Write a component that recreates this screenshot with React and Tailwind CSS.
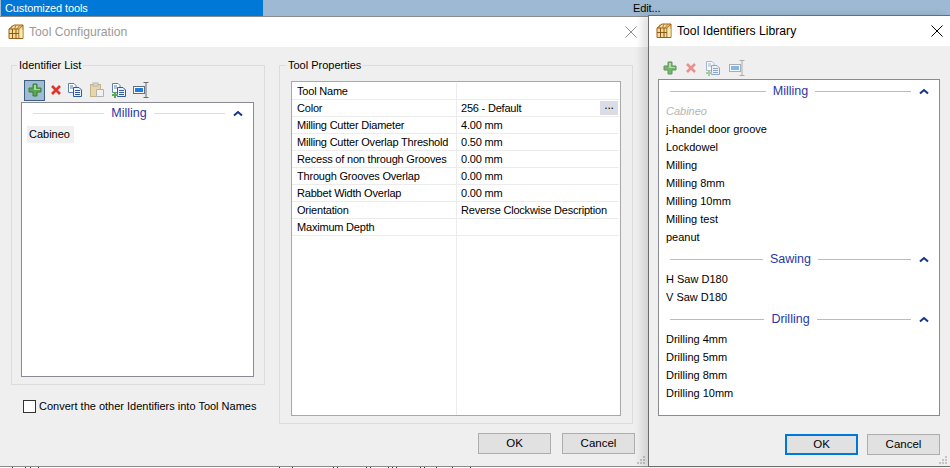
import React from 'react';

const FONT = 'font-["Liberation_Sans",Arial,sans-serif]';

// Small cabinet icon used on both title bars
function CabinetIcon() {
    return (
        <svg width="16" height="16" viewBox="0 0 16 16" className="shrink-0">
            <path d="M1 5 L6 1 H15 V14.5 H1 Z" fill="#f6dc94" stroke="#9c5f1e" />
            <path d="M1 5 H10.5 L15 1" fill="none" stroke="#9c5f1e" />
            <path d="M4 1.5 L3 5 M8 1 L6.5 5 M12 1 L9 5" fill="none" stroke="#b9792c" />
            <path d="M4.5 5 V14.5 M8 5 V14.5 M11 5 V14.5 M1 9.5 H11" stroke="#8a5a1c" fill="none" />
            <rect x="11.5" y="5.5" width="3" height="8.5" fill="#fbeeb0" />
        </svg>
    );
}

function PlusIcon({ faded }) {
    return (
        <svg width="14" height="14" viewBox="0 0 14 14" className={faded ? 'opacity-80' : ''}>
            <path d="M5 1 H9 V5 H13 V9 H9 V13 H5 V9 H1 V5 H5 Z" fill="#5aa84f" stroke="#3d7f3a" />
            <path d="M6 2 H8 V6 H12 V7 H6 Z" fill="#a5d89a" />
        </svg>
    );
}

function CrossIcon({ faded }) {
    return (
        <svg width="12" height="12" viewBox="0 0 12 12" className={faded ? 'opacity-50' : ''}>
            <path d="M2 2 L10 10 M10 2 L2 10" stroke="#e0352b" strokeWidth="2.6" />
        </svg>
    );
}

function CopyIcon({ faded, plus }) {
    return (
        <svg width="16" height="16" viewBox="0 0 16 16" className={faded ? 'opacity-50' : ''}>
            <path d="M1.5 1.5 H7 L9 3.5 V10.5 H1.5 Z" fill="#fff" stroke="#5f7fb0" />
            <path d="M6.5 5.5 H12 L14.5 8 V14.5 H6.5 Z" fill="#eaf1fb" stroke="#2f5a9c" />
            <path d="M8 8.5 H13 M8 10.5 H13 M8 12.5 H13" stroke="#2f5a9c" />
            <path d="M3 4 H6 M3 6 H6" stroke="#5f7fb0" />
            {plus && <path d="M3 10 H5 V12 H7 V14 H5 V16 H3 V14 H1 V12 H3 Z" fill="#5aa84f" />}
        </svg>
    );
}

function PasteIcon() {
    return (
        <svg width="16" height="16" viewBox="0 0 16 16" className="opacity-60">
            <rect x="1.5" y="2.5" width="10" height="12" fill="#e6c67a" stroke="#a98a45" />
            <rect x="4" y="1" width="5" height="3" fill="#c9c9c9" stroke="#8f8f8f" />
            <path d="M7.5 7.5 H14.5 V14.5 H7.5 Z" fill="#f3f3f3" stroke="#8a8a8a" />
        </svg>
    );
}

function RenameIcon({ faded }) {
    return (
        <svg width="16" height="16" viewBox="0 0 16 16" className={faded ? 'opacity-50' : ''}>
            <rect x="0.5" y="4.5" width="11" height="7" fill="#fff" stroke="#5f6f86" />
            <rect x="2" y="6" width="8" height="4" fill="#1f7ee0" />
            <path d="M10.5 0.5 H15.5 M13 0.5 V15.5 M10.5 15.5 H15.5" stroke="#6b6b6b" fill="none" />
        </svg>
    );
}

function SectionHeader({ title, lineClass }) {
    return (
        <div className="flex items-center h-[18px]">
            <div className={`h-px flex-1 ml-[11px] ${lineClass}`} />
            <span className="px-[7px] text-[12.5px] text-[#2b35a8] leading-[18px]">{title}</span>
            <div className={`h-px flex-1 ${lineClass}`} />
            <svg width="10" height="7" viewBox="0 0 10 7" className="ml-[8px] mr-[10px]">
                <path d="M1 5.5 L5 2 L9 5.5" fill="none" stroke="#12358c" strokeWidth="2" />
            </svg>
        </div>
    );
}

function TitleBar({ title, inactive, closeClass }) {
    return (
        <div className={`h-[30px] bg-white flex items-center pr-[7px] shrink-0 ${inactive ? 'pl-[8px]' : 'pl-[7px]'}`}>
            <CabinetIcon />
            <span className={`ml-[5px] text-[12.2px] flex-1 ${inactive ? 'text-[#9a9a9a]' : 'text-black'}`}>{title}</span>
            <svg width="12" height="12" viewBox="0 0 12 12" className={closeClass}>
                <path d="M0.5 0.5 L11.5 11.5 M11.5 0.5 L0.5 11.5" stroke="currentColor" />
            </svg>
        </div>
    );
}

function DialogButton({ label, primary }) {
    return (
        <button className={`w-[73px] h-[21px] bg-[#e1e1e1] text-[11.5px] leading-none text-black border ${primary ? 'border-2 border-[#0078d7]' : 'border-[#adadad]'}`}>
            {label}
        </button>
    );
}

function Grip() {
    return (
        <svg width="9" height="9" viewBox="0 0 9 9" className="absolute right-[2px] bottom-[1px]">
            <path d="M6 0 h2 v2 h-2 Z M3 3 h2 v2 h-2 Z M6 3 h2 v2 h-2 Z M0 6 h2 v2 h-2 Z M3 6 h2 v2 h-2 Z M6 6 h2 v2 h-2 Z" fill="#c4c4c4" />
        </svg>
    );
}

const properties = [
    ['Tool Name', ''],
    ['Color', '256 - Default'],
    ['Milling Cutter Diameter', '4.00 mm'],
    ['Milling Cutter Overlap Threshold', '0.50 mm'],
    ['Recess of non through Grooves', '0.00 mm'],
    ['Through Grooves Overlap', '0.00 mm'],
    ['Rabbet Width Overlap', '0.00 mm'],
    ['Orientation', 'Reverse Clockwise Description'],
    ['Maximum Depth', ''],
];

const library = [
    { title: 'Milling', items: ['Cabineo', 'j-handel door groove', 'Lockdowel', 'Milling', 'Milling 8mm', 'Milling 10mm', 'Milling test', 'peanut'] },
    { title: 'Sawing', items: ['H Saw D180', 'V Saw D180'] },
    { title: 'Drilling', items: ['Drilling 4mm', 'Drilling 5mm', 'Drilling 8mm', 'Drilling 10mm'] },
];

// Bits of the window behind that peek out under the dialog
const ticks = [12, 25, 30, 38, 279, 292, 333, 337, 366, 370, 388, 392, 396, 420, 424, 436, 452, 470];

function ToolConfiguration() {
    return (
        <div className="absolute left-0 top-[17px] w-[648px] h-[449px] bg-[#efefef] flex flex-col">
            <TitleBar title="Tool Configuration" inactive closeClass="text-[#8f8f8f] mr-[4px]" />
            <div className="flex px-[11px] pt-[10px] gap-[14px]">
                {/* Left column */}
                <div className="w-[254px]">
                    <fieldset className="h-[328px] border border-[#dcdcdc] pl-[9px] pr-[10px]">
                        <legend className="-ml-[4px] px-[2px] text-[11px] leading-[17px] text-black">Identifier List</legend>
                        <div className="flex items-center h-[22px] mt-[5px] ml-[3px] gap-[6px]">
                            <div className="w-[21px] h-[21px] bg-[#9fbcd4] border border-[#3f5f7f] flex items-center justify-center"><PlusIcon /></div>
                            <div className="-ml-[2px] w-[14px] flex justify-center"><CrossIcon /></div>
                            <div className="-ml-[2px] flex"><CopyIcon /></div>
                            <PasteIcon />
                            <CopyIcon plus />
                            <RenameIcon />
                        </div>
                        <div className="h-[275px] mt-px bg-white border border-[#8a8a96] pt-px">
                            <SectionHeader title="Milling" lineClass="bg-[#d3dcf0]" />
                            <div className="mt-[4px] ml-[5px] w-[47px] h-[17px] pl-[2px] bg-[#f0f0f0] text-[11px] leading-[16px] text-black">Cabineo</div>
                        </div>
                    </fieldset>
                    <label className="flex items-center mt-[14px] ml-[12px]">
                        <span className="w-[13px] h-[13px] shrink-0 bg-white border border-[#333333]" />
                        <span className="ml-[3px] text-[11px] leading-[14px] text-black whitespace-nowrap">Convert the other Identifiers into Tool Names</span>
                    </label>
                </div>
                {/* Right column */}
                <fieldset className="w-[354px] h-[367px] border border-[#dcdcdc] pl-[11px]">
                    <legend className="-ml-[5px] px-[2px] text-[11px] leading-[17px] text-black">Tool Properties</legend>
                    <div className="w-[330px] h-[335px] mt-[7px] bg-white border border-[#a8a8a8] flex flex-col pt-px">
                        {properties.map(([name, value]) => (
                            <div key={name} className="flex h-[17px] border-b border-[#ececec] mr-px text-[11px] tracking-[-0.2px] leading-[16px] text-black relative">
                                <div className="w-[165px] shrink-0 pl-[5px] whitespace-nowrap overflow-hidden border-r border-[#ececec]">{name}</div>
                                <div className="pl-[4px] whitespace-nowrap">{value}</div>
                                {name === 'Color' && (
                                    <div className="absolute right-[1px] top-px w-[18px] h-[14px] bg-[#dcdce4] text-[12px] leading-[9px] text-center">...</div>
                                )}
                            </div>
                        ))}
                        <div className="w-[165px] flex-1 border-r border-[#ececec]" />
                    </div>
                </fieldset>
            </div>
            <div className="flex justify-end gap-[11px] pr-[13px] mt-[9px]">
                <DialogButton label="OK" />
                <DialogButton label="Cancel" />
            </div>
            <Grip />
        </div>
    );
}

function ToolLibrary() {
    return (
        <div className="absolute left-[648px] top-[15px] w-[302px] h-[452px] bg-[#efefef] border-l border-t border-b border-[#6d6d6d] flex flex-col shadow-[-6px_0_8px_rgba(0,0,0,0.12)]">
            <TitleBar title="Tool Identifiers Library" closeClass="text-black" />
            <div className="flex items-center h-[16px] mt-[14px] ml-[14px] gap-[8px]">
                <PlusIcon faded />
                <CrossIcon faded />
                <CopyIcon faded plus />
                <RenameIcon faded />
            </div>
            <div className="w-[282px] h-[337px] ml-[9px] mt-[3px] bg-white border border-[#8a8a96] pt-[2px]">
                {library.map((group, i) => (
                    <div key={group.title} className={i > 0 ? 'mt-[4px]' : ''}>
                        <SectionHeader title={group.title} lineClass="bg-[#a9bde6]" />
                        <div className="pt-[2px]">
                            {group.items.map((item) => (
                                <div key={item} className={`h-[18px] pl-[7px] text-[11px] leading-[18px] ${item === 'Cabineo' ? 'italic text-[#b5b5b5]' : 'text-black'}`}>
                                    {item}
                                </div>
                            ))}
                        </div>
                    </div>
                ))}
            </div>
            <div className="flex justify-end gap-[9px] pr-[10px] mt-[18px]">
                <DialogButton label="OK" primary />
                <DialogButton label="Cancel" />
            </div>
            <Grip />
        </div>
    );
}

export default function App() {
    return (
        <div className={`relative w-[950px] h-[468px] overflow-hidden bg-white ${FONT}`}>
            {/* Window behind the dialogs */}
            <div className="flex h-[17px] bg-[#9db9d3] border-b border-[#8d8d8d] text-[11px] leading-[16px] tracking-[-0.1px] text-black">
                <div className="ml-px w-[262px] bg-[#0078d7] text-white pl-[4px]">Customized tools</div>
                <div className="ml-[370px]">Edit...</div>
            </div>
            <ToolConfiguration />
            <ToolLibrary />
            <div className="absolute left-0 top-[466px] w-[648px] h-px bg-[#8d8d8d]" />
            {ticks.map((x) => (
                <div key={x} className="absolute top-[467px] w-px h-px bg-[#333333]" style={{ left: x }} />
            ))}
        </div>
    );
}
